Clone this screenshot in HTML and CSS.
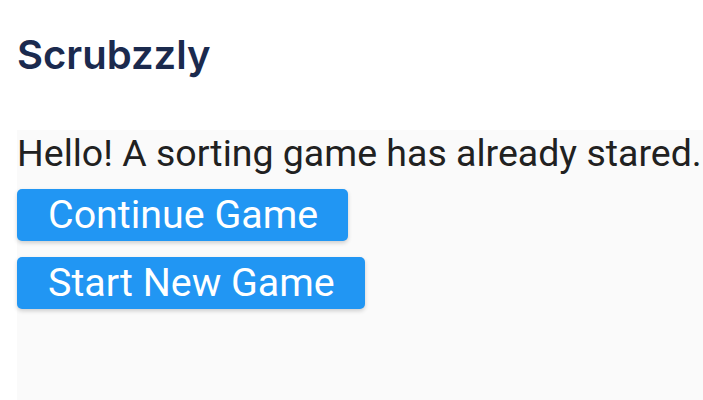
FILE: index.html
```html
<!DOCTYPE html>
<html>
<head>
<meta charset="utf-8">
<link rel="stylesheet" href="styles.css">
</head>
<body>
<div class="app">
  <h1 class="title">Scrubzzly</h1>
  <div class="panel">
    <p class="message">Hello! A sorting game has already stared.</p>
    <button class="btn">Continue Game</button>
    <button class="btn">Start New Game</button>
  </div>
</div>
</body>
</html>
```
FILE: styles.css
```css
html, body {
  margin: 0;
  padding: 0;
  background: #ffffff;
  height: 100%;
}
.app {
  padding-left: 17px;
  height: 100%;
  display: flex;
  flex-direction: column;
  overflow: hidden;
}
.title {
  margin: 0;
  padding-top: 31px;
  font-family: Inter, "Liberation Sans", sans-serif;
  font-weight: 600;
  font-size: 40px;
  line-height: 48px;
  color: #1b2a4e;
  height: 130px;
  flex: none;
  box-sizing: border-box;
}
.panel {
  flex: 1;
  background: #fafafa;
  display: flex;
  flex-direction: column;
  align-items: flex-start;
  font-family: Roboto, "Liberation Sans", sans-serif;
}
.message {
  margin: 0 0 13px 0;
  font-size: 37.5px;
  line-height: 46px;
  color: #212121;
  white-space: nowrap;
}
.btn {
  font-family: Roboto, "Liberation Sans", sans-serif;
  font-size: 39.4px;
  line-height: 46px;
  color: #ffffff;
  background: #2196f3;
  border: none;
  border-radius: 5px;
  padding: 3px 30px 3px 31px;
  margin-bottom: 16px;
  box-shadow: 0 2px 4px rgba(0, 0, 0, 0.18);
  cursor: pointer;
}
```
